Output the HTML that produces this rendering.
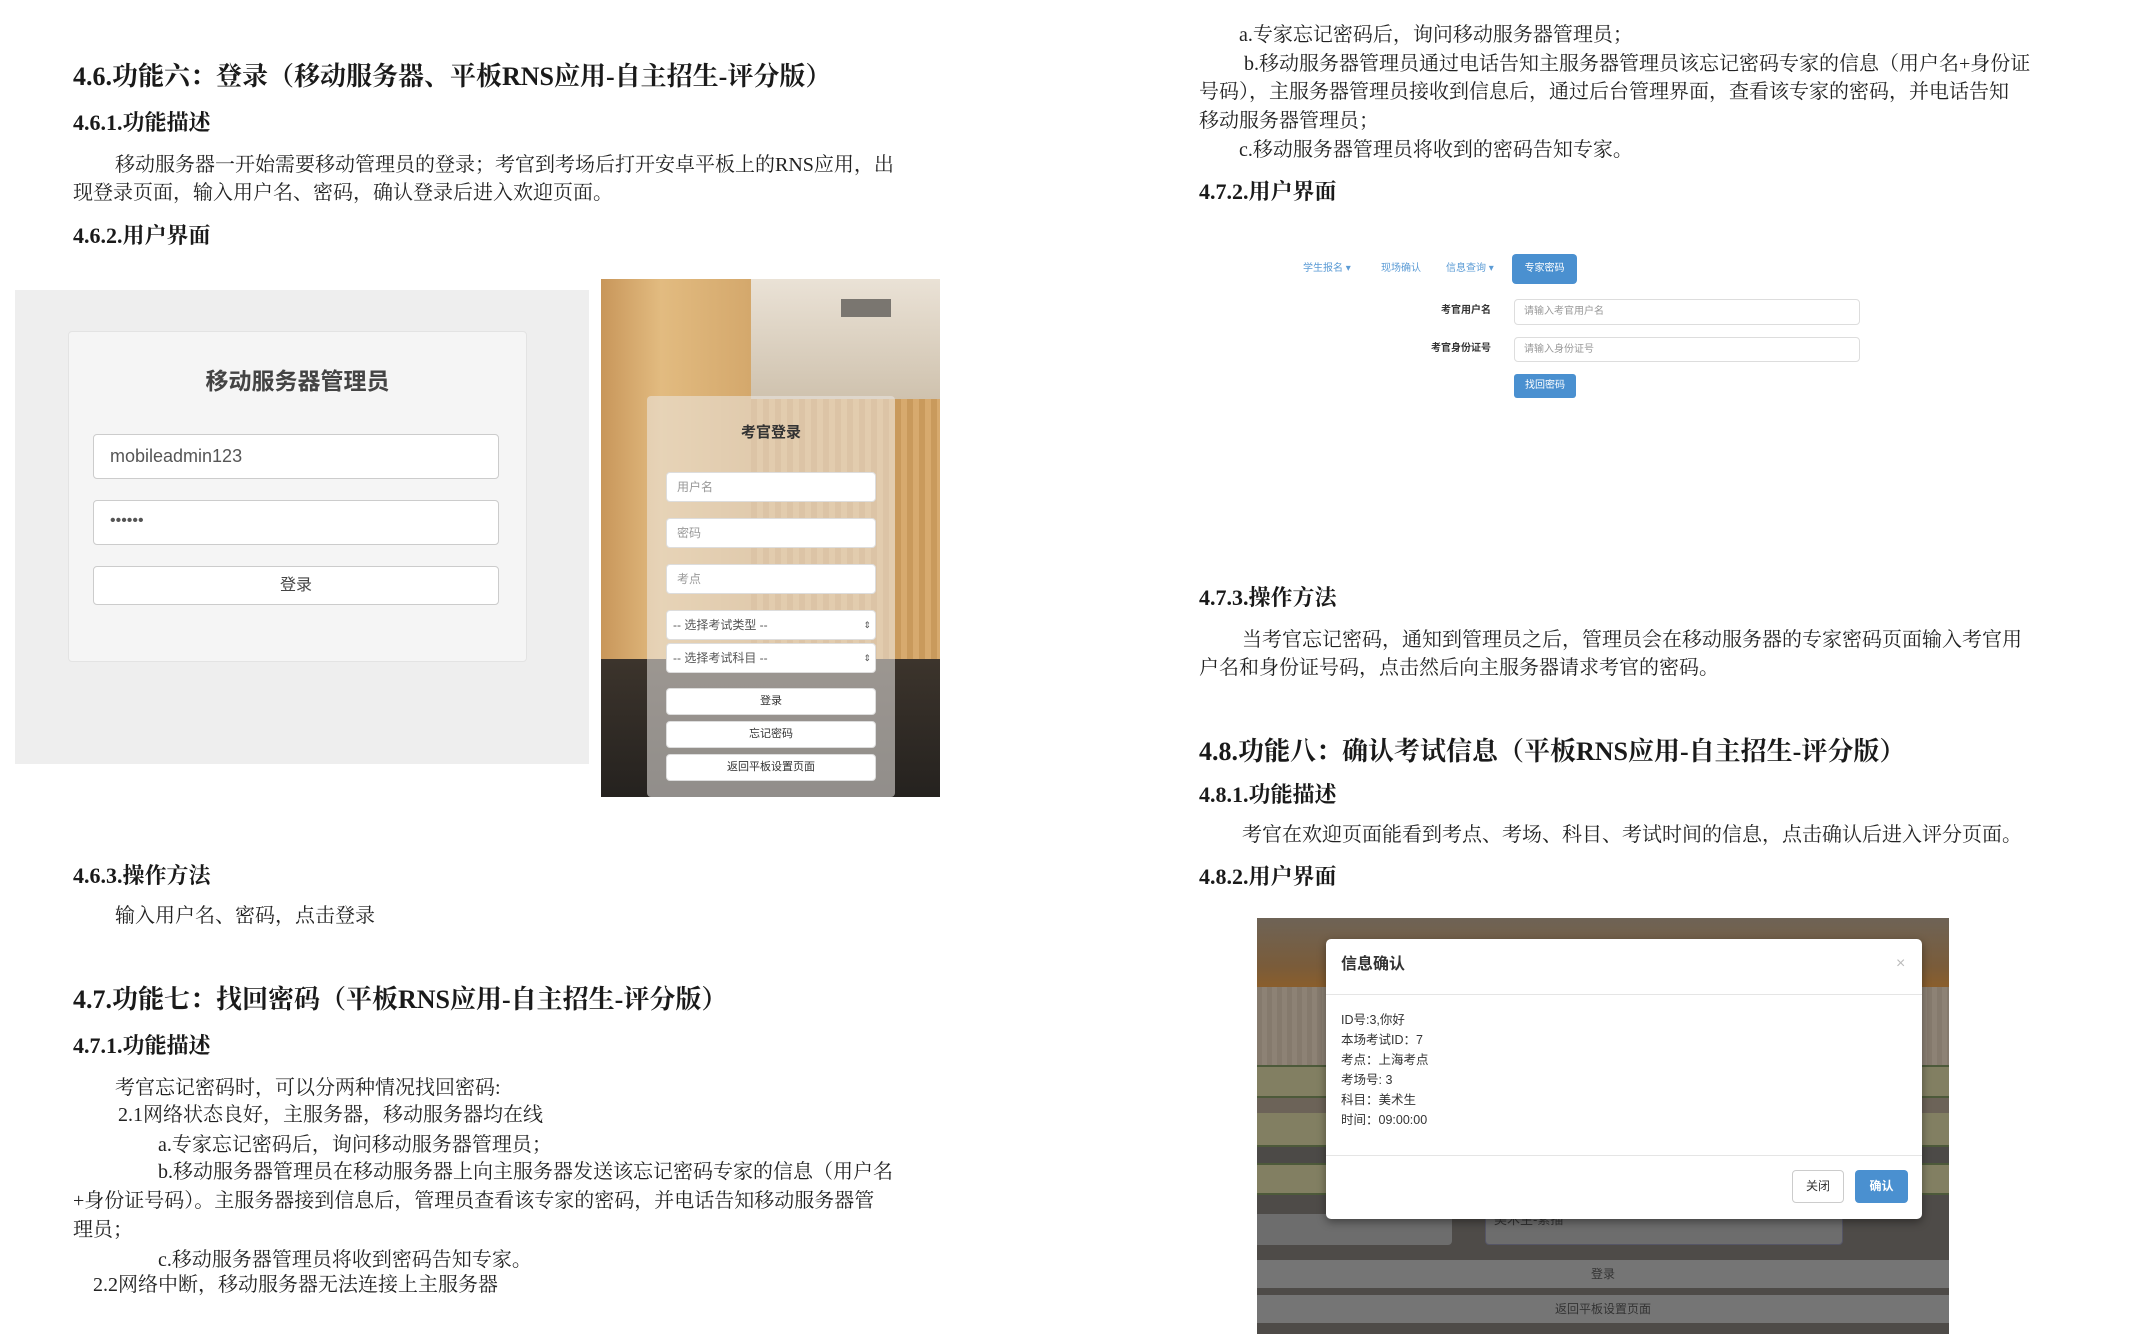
<!DOCTYPE html>
<html><head><meta charset="utf-8">
<style>
*{margin:0;padding:0;box-sizing:border-box}
body{width:2138px;height:1344px;background:#fff;position:relative;overflow:hidden;font-family:"Liberation Serif","Noto Serif CJK SC",serif;color:#1a1a1a}
.a{position:absolute;white-space:nowrap}
.h2{font-size:26px;line-height:34px;font-weight:bold}
.h3{font-size:22px;line-height:30px;font-weight:bold}
.p{font-size:20px;line-height:28px;color:#222}
.s{font-family:"Liberation Sans","Noto Sans CJK SC",sans-serif}
.inp{position:absolute;background:#fff;border:1px solid #ccc;border-radius:4px}
</style></head><body>

<!-- LEFT COLUMN -->
<div class="a h2" style="left:73px;top:60px">4.6.功能六：登录（移动服务器、平板RNS应用-自主招生-评分版）</div>
<div class="a h3" style="left:73px;top:108px">4.6.1.功能描述</div>
<div class="a p" style="left:115px;top:151px">移动服务器一开始需要移动管理员的登录；考官到考场后打开安卓平板上的RNS应用，出</div>
<div class="a p" style="left:73px;top:179px">现登录页面，输入用户名、密码，确认登录后进入欢迎页面。</div>
<div class="a h3" style="left:73px;top:221px">4.6.2.用户界面</div>

<!-- mobile admin screenshot -->
<div class="a s" style="left:15px;top:290px;width:574px;height:474px;background:#eeeeee">
  <div class="a" style="left:53px;top:41px;width:459px;height:331px;background:#f5f5f5;border:1px solid #e3e3e3;border-radius:4px"></div>
  <div class="a" style="left:53px;top:76px;width:459px;text-align:center;font-size:23px;line-height:30px;color:#444;font-weight:bold">移动服务器管理员</div>
  <div class="inp" style="left:78px;top:144px;width:406px;height:45px;font-size:18px;line-height:43px;padding-left:16px;color:#555">mobileadmin123</div>
  <div class="inp" style="left:78px;top:210px;width:406px;height:45px;font-size:16px;line-height:40px;padding-left:16px;color:#555">••••••</div>
  <div class="inp" style="left:78px;top:276px;width:406px;height:39px;font-size:16px;line-height:37px;text-align:center;color:#444">登录</div>
</div>

<!-- tablet login photo -->
<div class="a s" style="left:601px;top:279px;width:339px;height:518px;overflow:hidden;background:linear-gradient(180deg,#d9b985 0%,#cda66c 45%,#a07a50 60%,#3a3530 70%,#2c2a28 100%)">
  <div class="a" style="left:0;top:0;width:150px;height:380px;background:linear-gradient(90deg,#c8965a,#e2bb80 40%,#d4a86c)"></div>
  <div class="a" style="left:150px;top:0;width:189px;height:120px;background:linear-gradient(180deg,#eae2d6,#cfc2ae)"></div>
  <div class="a" style="left:240px;top:20px;width:50px;height:18px;background:#7a7670"></div>
  <div class="a" style="left:150px;top:120px;width:189px;height:260px;background:repeating-linear-gradient(90deg,#c99a5c 0 6px,#d7aa6e 6px 12px)"></div>
  <div class="a" style="left:0;top:380px;width:339px;height:138px;background:linear-gradient(180deg,#3c342c,#25221f)"></div>
  <div class="a" style="left:46px;top:117px;width:248px;height:401px;background:rgba(235,232,228,.55);border-radius:4px"></div>
  <div class="a" style="left:46px;top:143px;width:248px;text-align:center;font-size:15px;font-weight:bold;color:#333;line-height:22px">考官登录</div>
  <div class="inp" style="left:65px;top:193px;width:210px;height:30px;font-size:12px;line-height:28px;padding-left:10px;color:#999;border-color:#ddd">用户名</div>
  <div class="inp" style="left:65px;top:239px;width:210px;height:30px;font-size:12px;line-height:28px;padding-left:10px;color:#999;border-color:#ddd">密码</div>
  <div class="inp" style="left:65px;top:285px;width:210px;height:30px;font-size:12px;line-height:28px;padding-left:10px;color:#999;border-color:#ddd">考点</div>
  <div class="inp" style="left:65px;top:331px;width:210px;height:30px;font-size:12px;line-height:28px;padding-left:6px;color:#555;border-color:#ddd">-- 选择考试类型 --<span style="position:absolute;right:4px;font-size:9px">⇕</span></div>
  <div class="inp" style="left:65px;top:364px;width:210px;height:30px;font-size:12px;line-height:28px;padding-left:6px;color:#555;border-color:#ddd">-- 选择考试科目 --<span style="position:absolute;right:4px;font-size:9px">⇕</span></div>
  <div class="inp" style="left:65px;top:409px;width:210px;height:27px;font-size:11px;line-height:25px;text-align:center;color:#333;border-color:#ddd">登录</div>
  <div class="inp" style="left:65px;top:442px;width:210px;height:27px;font-size:11px;line-height:25px;text-align:center;color:#333;border-color:#ddd">忘记密码</div>
  <div class="inp" style="left:65px;top:475px;width:210px;height:27px;font-size:11px;line-height:25px;text-align:center;color:#333;border-color:#ddd">返回平板设置页面</div>
</div>

<div class="a h3" style="left:73px;top:861px">4.6.3.操作方法</div>
<div class="a p" style="left:115px;top:902px">输入用户名、密码，点击登录</div>
<div class="a h2" style="left:73px;top:983px">4.7.功能七：找回密码（平板RNS应用-自主招生-评分版）</div>
<div class="a h3" style="left:73px;top:1031px">4.7.1.功能描述</div>
<div class="a p" style="left:115px;top:1074px">考官忘记密码时，可以分两种情况找回密码:</div>
<div class="a p" style="left:118px;top:1101px">2.1网络状态良好，主服务器，移动服务器均在线</div>
<div class="a p" style="left:158px;top:1131px">a.专家忘记密码后，询问移动服务器管理员；</div>
<div class="a p" style="left:158px;top:1158px">b.移动服务器管理员在移动服务器上向主服务器发送该忘记密码专家的信息（用户名</div>
<div class="a p" style="left:73px;top:1187px">+身份证号码）。主服务器接到信息后，管理员查看该专家的密码，并电话告知移动服务器管</div>
<div class="a p" style="left:73px;top:1216px">理员；</div>
<div class="a p" style="left:158px;top:1246px">c.移动服务器管理员将收到密码告知专家。</div>
<div class="a p" style="left:93px;top:1271px">2.2网络中断，移动服务器无法连接上主服务器</div>

<!-- RIGHT COLUMN -->
<div class="a p" style="left:1239px;top:21px">a.专家忘记密码后，询问移动服务器管理员；</div>
<div class="a p" style="left:1244px;top:50px">b.移动服务器管理员通过电话告知主服务器管理员该忘记密码专家的信息（用户名+身份证</div>
<div class="a p" style="left:1199px;top:78px">号码），主服务器管理员接收到信息后，通过后台管理界面，查看该专家的密码，并电话告知</div>
<div class="a p" style="left:1199px;top:107px">移动服务器管理员；</div>
<div class="a p" style="left:1239px;top:136px">c.移动服务器管理员将收到的密码告知专家。</div>
<div class="a h3" style="left:1199px;top:177px">4.7.2.用户界面</div>

<div class="a s" style="left:1303px;top:261px;font-size:10px;line-height:16px;color:#5b9bd5">学生报名 ▾</div>
<div class="a s" style="left:1381px;top:261px;font-size:10px;line-height:16px;color:#5b9bd5">现场确认</div>
<div class="a s" style="left:1446px;top:261px;font-size:10px;line-height:16px;color:#5b9bd5">信息查询 ▾</div>
<div class="a s" style="left:1512px;top:254px;width:65px;height:30px;background:#4a90d0;border-radius:4px;color:#fff;font-size:10px;line-height:30px;text-align:center">专家密码</div>
<div class="a s" style="left:1420px;top:303px;width:71px;text-align:right;font-size:10px;font-weight:bold;color:#333;line-height:16px">考官用户名</div>
<div class="inp s" style="left:1514px;top:299px;width:346px;height:26px;font-size:10px;line-height:24px;padding-left:9px;color:#999;border-color:#ddd">请输入考官用户名</div>
<div class="a s" style="left:1420px;top:341px;width:71px;text-align:right;font-size:10px;font-weight:bold;color:#333;line-height:16px">考官身份证号</div>
<div class="inp s" style="left:1514px;top:337px;width:346px;height:25px;font-size:10px;line-height:23px;padding-left:9px;color:#999;border-color:#ddd">请输入身份证号</div>
<div class="a s" style="left:1514px;top:374px;width:62px;height:24px;background:#4a90d0;border-radius:3px;color:#fff;font-size:10px;line-height:24px;text-align:center">找回密码</div>

<div class="a h3" style="left:1199px;top:583px">4.7.3.操作方法</div>
<div class="a p" style="left:1242px;top:626px">当考官忘记密码，通知到管理员之后，管理员会在移动服务器的专家密码页面输入考官用</div>
<div class="a p" style="left:1199px;top:654px">户名和身份证号码，点击然后向主服务器请求考官的密码。</div>
<div class="a h2" style="left:1199px;top:735px">4.8.功能八：确认考试信息（平板RNS应用-自主招生-评分版）</div>
<div class="a h3" style="left:1199px;top:780px">4.8.1.功能描述</div>
<div class="a p" style="left:1242px;top:821px">考官在欢迎页面能看到考点、考场、科目、考试时间的信息，点击确认后进入评分页面。</div>
<div class="a h3" style="left:1199px;top:862px">4.8.2.用户界面</div>

<!-- confirm screenshot -->
<div class="a s" style="left:1257px;top:918px;width:692px;height:416px;overflow:hidden;background:#4e4b48">
  <div class="a" style="left:0;top:0;width:692px;height:69px;background:linear-gradient(180deg,#6e6356,#7a5c3a 70%,#8a5e2c)"></div>
  <div class="a" style="left:0;top:69px;width:692px;height:78px;background:repeating-linear-gradient(90deg,#857a6d 0 5px,#8d8275 5px 10px)"></div>
  <div class="a" style="left:0;top:147px;width:692px;height:33px;background:#827f62;border-top:2px solid #4d5a3a;border-bottom:2px solid #4d5a3a"></div>
  <div class="a" style="left:0;top:180px;width:692px;height:15px;background:#6c6358"></div>
  <div class="a" style="left:0;top:195px;width:692px;height:34px;background:#827f62;border-bottom:2px solid #4d5a3a"></div>
  <div class="a" style="left:0;top:229px;width:692px;height:16px;background:#4c4a47"></div>
  <div class="a" style="left:0;top:245px;width:692px;height:32px;background:#827f62;border-top:2px solid #4d5a3a;border-bottom:2px solid #4d5a3a"></div>
  <div class="a" style="left:0;top:296px;width:195px;height:31px;background:#6d6d6d;border-radius:0 0 4px 0"></div>
  <div class="a" style="left:228px;top:296px;width:358px;height:31px;background:#6d6d6d;border:1px solid #556;border-radius:4px;font-size:13px;line-height:10px;padding-left:8px;color:#333">美术生-素描</div>
  <div class="a" style="left:0;top:342px;width:692px;height:28px;background:#757575;text-align:center;font-size:12px;line-height:28px;color:#333">登录</div>
  <div class="a" style="left:0;top:377px;width:692px;height:28px;background:#757575;text-align:center;font-size:12px;line-height:28px;color:#333">返回平板设置页面</div>
  <div class="a" style="left:69px;top:21px;width:596px;height:280px;background:#fff;border-radius:5px;box-shadow:0 3px 9px rgba(0,0,0,.4)">
    <div class="a" style="left:15px;top:14px;font-size:16px;font-weight:bold;color:#333;line-height:24px">信息确认</div>
    <div class="a" style="left:570px;top:14px;font-size:16px;color:#bbb;line-height:22px">×</div>
    <div class="a" style="left:0;top:55px;width:596px;height:1px;background:#e5e5e5"></div>
    <div class="a" style="left:15px;top:71px;font-size:12.5px;line-height:20px;color:#333;white-space:pre">ID号:3,你好
本场考试ID：7
考点：上海考点
考场号: 3
科目：美术生
时间：09:00:00</div>
    <div class="a" style="left:0;top:216px;width:596px;height:1px;background:#e5e5e5"></div>
    <div class="a" style="left:466px;top:231px;width:52px;height:33px;border:1px solid #ccc;border-radius:4px;font-size:12px;line-height:31px;text-align:center;color:#333">关闭</div>
    <div class="a" style="left:529px;top:231px;width:53px;height:33px;background:#4a90d0;border-radius:4px;font-size:12px;line-height:33px;text-align:center;color:#fff;font-weight:bold">确认</div>
  </div>
</div>
</body></html>
